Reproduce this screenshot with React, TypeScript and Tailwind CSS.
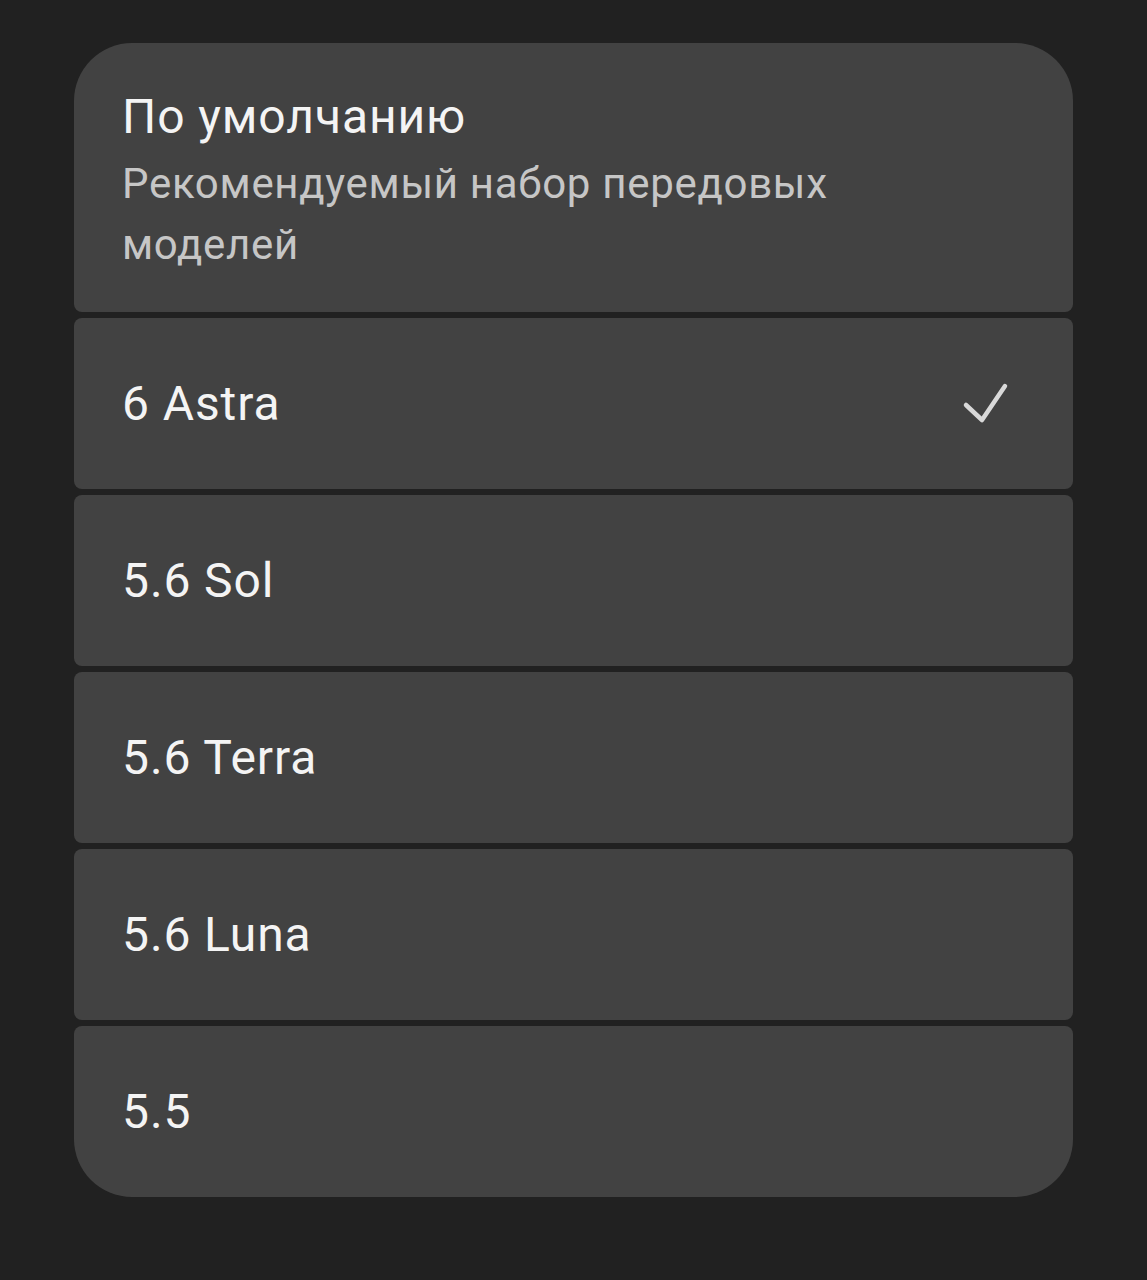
import React from "react";

const items = ["6 Astra", "5.6 Sol", "5.6 Terra", "5.6 Luna", "5.5"];

export default function App() {
  return (
    <div
      className="min-h-[1280px] w-full bg-[#212121] pt-[43px] pl-[74px]"
      style={{ fontFamily: "Roboto, 'Noto Sans', sans-serif" }}
    >
      <div className="flex w-[999px] flex-col gap-[6px]">
        <div className="h-[269px] rounded-t-[58px] rounded-b-[8px] bg-[#424242] pl-[48px] pt-[46px]">
          <div className="text-[48px] leading-[56px] tracking-[0.9px] text-[#f4f4f4]">По умолчанию</div>
          <div className="mt-[8px] max-w-[800px] text-[42px] leading-[61px] tracking-[0.7px] text-[#c6c6c6]">
            Рекомендуемый набор передовых моделей
          </div>
        </div>
        {items.map((label, i) => (
          <div
            key={label}
            className={
              i === items.length - 1
                ? "flex h-[171px] items-center justify-between rounded-t-[8px] rounded-b-[58px] bg-[#424242] pl-[48px] pr-[64px]"
                : "flex h-[171px] items-center justify-between rounded-[8px] bg-[#424242] pl-[48px] pr-[64px]"
            }
          >
            <span className="text-[48px] leading-[56px] tracking-[0.9px] text-[#f4f4f4]">{label}</span>
            {i === 0 && (
              <svg width="48" height="48" viewBox="0 0 48 48" fill="none">
                <path
                  d="M5 25 L21 40 L44 6"
                  stroke="#d9d9d9"
                  strokeWidth="4.5"
                  strokeLinecap="round"
                  strokeLinejoin="round"
                />
              </svg>
            )}
          </div>
        ))}
      </div>
    </div>
  );
}
